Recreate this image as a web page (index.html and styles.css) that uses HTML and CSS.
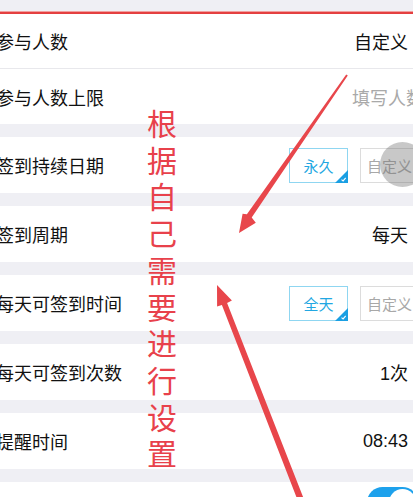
FILE: index.html
```html
<!DOCTYPE html>
<html lang="zh-CN">
<head>
    <meta charset="UTF-8">
    <meta name="viewport" content="width=device-width, initial-scale=1.0">
    <title>签到设置</title>
    <link rel="stylesheet" href="styles.css">
</head>
<body>
    <div class="page">
        <div class="top-band"></div>
        <div class="red-line"></div>

        <div class="group">
            <div class="row first"><span class="label">参与人数</span><span class="value">自定义</span></div>
            <div class="row"><span class="label">参与人数上限</span><span class="value placeholder">填写人数</span></div>
        </div>

        <div class="group">
            <div class="row tall">
                <span class="label">签到持续日期</span>
                <div class="choices">
                    <span class="choice active">永久<svg class="tick" viewBox="0 0 13 13"><path d="M13 0V13H0Z" fill="#1a9fe3"/><path d="M6.5 9.6l1.6 1.3 2.6-3" stroke="#fff" stroke-width="1.1" fill="none"/></svg></span>
                    <span class="choice">自定义</span>
                </div>
            </div>
        </div>

        <div class="group">
            <div class="row tall"><span class="label">签到周期</span><span class="value">每天</span></div>
        </div>

        <div class="group">
            <div class="row tall">
                <span class="label">每天可签到时间</span>
                <div class="choices">
                    <span class="choice active">全天<svg class="tick" viewBox="0 0 13 13"><path d="M13 0V13H0Z" fill="#1a9fe3"/><path d="M6.5 9.6l1.6 1.3 2.6-3" stroke="#fff" stroke-width="1.1" fill="none"/></svg></span>
                    <span class="choice">自定义</span>
                </div>
            </div>
        </div>

        <div class="group">
            <div class="row tall"><span class="label">每天可签到次数</span><span class="value num">1次</span></div>
        </div>

        <div class="group">
            <div class="row tall"><span class="label">提醒时间</span><span class="value num">08:43</span></div>
        </div>

        <div class="group">
            <div class="row tall"><span class="label">开启提醒</span><span class="switch"><span class="knob"></span></span></div>
        </div>
    </div>

    <div class="float-button"></div>

    <div class="note">根据自己需要进行设置</div>

    <svg class="arrows" width="413" height="497" viewBox="0 0 413 497">
        <polygon fill="#e8464b" points="347.8,75.5 346.2,74.5 246.9,214.3 242.6,213.7 239,233 255.8,222.7 251.7,217.5"/>
        <polygon fill="#e8464b" points="217,285 217.1,306.6 221.9,305 299.5,505 305.3,502.7 227.1,302.9 231.9,300.6"/>
    </svg>
</body>
</html>
```

FILE: styles.css
```css
html, body { margin: 0; padding: 0; }
body { width: 413px; height: 497px; overflow: hidden; background-color: #efeff4; font-family: "Liberation Sans", "Noto Sans CJK SC", sans-serif; position: relative; }
.page { margin-left: -4px; width: 417px; }
.top-band { height: 11px; background-color: #efeff4; }
.red-line { height: 2px; border-top: 1px solid #f0a0a0; background-color: #e43f40; }
.group { background-color: #ffffff; margin-bottom: 13px; }
.row { height: 55px; display: flex; align-items: center; justify-content: space-between; padding-right: 5px; box-sizing: border-box; font-size: 18px; color: #111111; }
.row.first { height: 55px; border-bottom: 1px solid #e8e8ec; }
.row.tall { height: 56px; }
.label { white-space: nowrap; }
.value { white-space: nowrap; }
.placeholder { color: #a9a9a9; margin-right: -16px; }
.choices { display: flex; gap: 12px; margin-right: -11px; }
.choice { position: relative; width: 59px; height: 35px; box-sizing: border-box; border: 1px solid #dcdcdc; color: #a8a8a8; font-size: 15px; font-family: "Noto Sans CJK SC", sans-serif; display: flex; align-items: center; justify-content: center; }
.choice.active { border-color: #8fd6f1; color: #22a7e2; }
.tick { position: absolute; right: -1px; bottom: -1px; width: 13px; height: 13px; }
.switch { position: relative; width: 51px; height: 31px; margin-top: -15px; margin-right: -10px; border-radius: 16px; background-color: #1da1ec; }
.knob { position: absolute; right: 2px; top: 2px; width: 27px; height: 27px; border-radius: 50%; background-color: #ffffff; }
.float-button { position: absolute; left: 380px; top: 142px; width: 45px; height: 45px; border-radius: 50%; background-color: rgba(110, 110, 110, 0.38); }
.note { position: absolute; left: 147px; top: 104px; width: 30px; font-size: 30px; line-height: 36.7px; color: #e8414b; font-family: "Noto Sans CJK SC", serif; text-align: center; }
.arrows { position: absolute; left: 0; top: 0; }
```
